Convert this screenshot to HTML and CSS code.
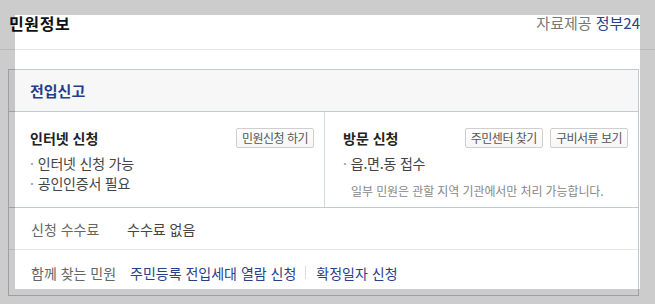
FILE: index.html
```html
<!DOCTYPE html>
<html lang="ko">
<head>
  <meta charset="UTF-8" />
  <title>민원정보 - 전입신고</title>
  <link rel="stylesheet" href="styles.css">
</head>
<body>

  <div class="상단">
    <h1>민원정보</h1>
    <p class="출처">자료제공 <a href="#">정부24</a></p>
  </div>

  <div class="민원상자">
    <h2>전입신고</h2>

    <div class="신청방법">
      <div class="방법">
        <div class="방법-머리">
          <h3>인터넷 신청</h3>
          <button>민원신청 하기</button>
        </div>
        <ul>
          <li>인터넷 신청 가능</li>
          <li>공인인증서 필요</li>
        </ul>
      </div>

      <div class="방법">
        <div class="방법-머리">
          <h3>방문 신청</h3>
          <div class="버튼들">
            <button>주민센터 찾기</button>
            <button>구비서류 보기</button>
          </div>
        </div>
        <ul>
          <li>읍.면.동 접수</li>
        </ul>
        <p class="안내">일부 민원은 관할 지역 기관에서만 처리 가능합니다.</p>
      </div>
    </div>

    <div class="행">
      <span class="행-이름">신청 수수료</span>
      <span>수수료 없음</span>
    </div>

    <div class="행 관련">
      <span class="행-이름">함께 찾는 민원</span>
      <a href="#">주민등록 전입세대 열람 신청</a>
      <span class="구분"></span>
      <a href="#">확정일자 신청</a>
    </div>
  </div>

  <!-- 강조 영역 -->
  <div class="강조"></div>

</body>
</html>
```

FILE: styles.css
```css
body {
  margin: 0;
  font-family: "Noto Sans CJK KR", "Noto Sans", sans-serif;
  background-color: #ffffff;
  color: #333;
}

a {
  color: #27408b;
  text-decoration: none;
}

.상단 {
  height: 50px;
  box-sizing: border-box;
  padding: 0 15px 0 9px;
  display: flex;
  justify-content: space-between;
  align-items: flex-start;
  border-bottom: 1px solid #e8e8e8;
}

.상단 h1 {
  margin: 0;
  padding-top: 13px;
  font-size: 16px;
  line-height: 20px;
  font-weight: 700;
  color: #111;
  letter-spacing: 0.6px;
}

.출처 {
  margin: 0;
  padding-top: 13px;
  font-size: 15px;
  line-height: 20px;
  color: #777;
}

.민원상자 {
  margin: 19px 0 0 8px;
  width: 631px;
  box-sizing: border-box;
  border: 1px solid #c3c9cf;
}

.민원상자 h2 {
  margin: 0;
  height: 42px;
  box-sizing: border-box;
  padding: 0 21px;
  line-height: 41px;
  font-size: 15px;
  font-weight: 700;
  color: #1f3f8c;
  background-color: #f7f7f8;
  border-bottom: 1px solid #c3c9cf;
}

.신청방법 {
  display: grid;
  grid-template-columns: 315px 1fr;
  height: 96px;
  box-sizing: border-box;
  border-bottom: 1px solid #c3c9cf;
}

.방법 {
  padding: 16px 10px 0 21px;
}

.방법 + .방법 {
  border-left: 1px solid #d3d8dc;
  padding-left: 18px;
}

.방법-머리 {
  display: flex;
  justify-content: space-between;
  align-items: center;
  height: 20px;
}

.방법-머리 h3 {
  margin: 0;
  font-size: 14px;
  font-weight: 700;
  color: #222;
}

.버튼들 {
  display: flex;
  gap: 7px;
}

.방법 button {
  height: 20px;
  padding: 0 5px;
  border: 1px solid #cfcfcf;
  border-radius: 2px;
  background: linear-gradient(#ffffff, #f6f6f6);
  font-family: inherit;
  font-size: 12px;
  line-height: 18px;
  color: #555;
  letter-spacing: -0.5px;
  cursor: pointer;
}

.방법 ul {
  list-style: none;
  margin: 5px 0 0;
  padding: 0;
}

.방법 li {
  font-size: 14px;
  line-height: 20px;
  color: #444;
  letter-spacing: -0.2px;
}

.방법 li::before {
  content: "·";
  color: #999;
  margin-right: 4px;
}

.안내 {
  margin: 10px 0 0 8px;
  font-size: 12px;
  line-height: 16px;
  color: #888;
  letter-spacing: -0.1px;
}

.행 {
  height: 42px;
  box-sizing: border-box;
  padding: 0 22px;
  display: flex;
  align-items: center;
  font-size: 14px;
  color: #444;
  border-bottom: 1px solid #e6e6e6;
}

.행-이름 {
  width: 96px;
  color: #666;
}

.관련 {
  height: 45px;
  border-bottom: none;
}

.관련 .행-이름 {
  width: 99px;
}

.구분 {
  width: 1px;
  height: 13px;
  background-color: #ddd;
  margin: 0 10px 0 9px;
}

.강조 {
  position: absolute;
  left: 15px;
  top: 15px;
  width: 625px;
  height: 274px;
  box-shadow: 0 0 0 1000px rgba(0, 0, 0, 0.2);
  pointer-events: none;
}
```
